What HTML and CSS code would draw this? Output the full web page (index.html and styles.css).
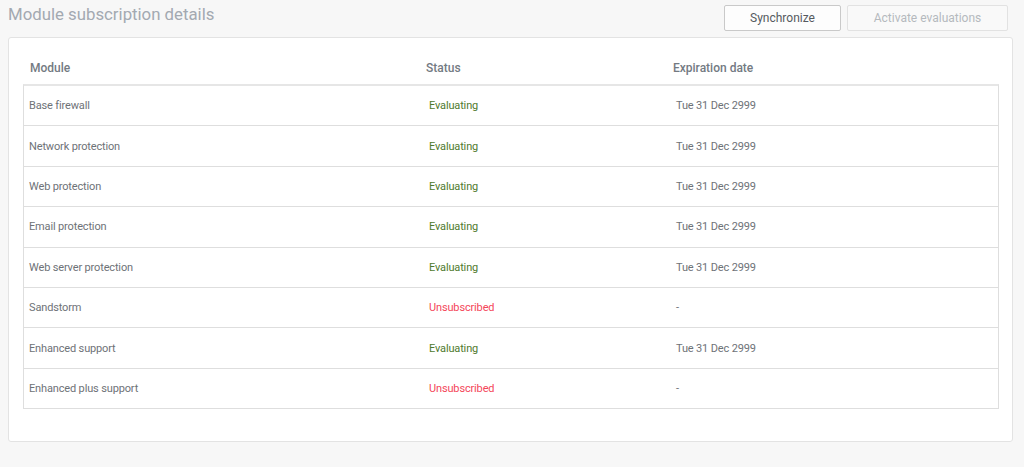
FILE: index.html
```html
<!DOCTYPE html>
<html>
<head>
<meta charset="utf-8">
<link rel="stylesheet" href="styles.css">
</head>
<body>
<div class="page">
  <div class="topbar">
    <h1 class="title">Module subscription details</h1>
    <div class="actions">
      <button class="btn">Synchronize</button>
      <button class="btn btn-disabled">Activate evaluations</button>
    </div>
  </div>
  <div class="card">
    <div class="thead">
      <div class="th c1">Module</div>
      <div class="th c2">Status</div>
      <div class="th c3">Expiration date</div>
    </div>
    <div class="tbody">
      <div class="row"><div class="td c1">Base firewall</div><div class="td c2 ok">Evaluating</div><div class="td c3">Tue 31 Dec 2999</div></div>
      <div class="row"><div class="td c1">Network protection</div><div class="td c2 ok">Evaluating</div><div class="td c3">Tue 31 Dec 2999</div></div>
      <div class="row"><div class="td c1">Web protection</div><div class="td c2 ok">Evaluating</div><div class="td c3">Tue 31 Dec 2999</div></div>
      <div class="row"><div class="td c1">Email protection</div><div class="td c2 ok">Evaluating</div><div class="td c3">Tue 31 Dec 2999</div></div>
      <div class="row"><div class="td c1">Web server protection</div><div class="td c2 ok">Evaluating</div><div class="td c3">Tue 31 Dec 2999</div></div>
      <div class="row"><div class="td c1">Sandstorm</div><div class="td c2 bad">Unsubscribed</div><div class="td c3">-</div></div>
      <div class="row"><div class="td c1">Enhanced support</div><div class="td c2 ok">Evaluating</div><div class="td c3">Tue 31 Dec 2999</div></div>
      <div class="row"><div class="td c1">Enhanced plus support</div><div class="td c2 bad">Unsubscribed</div><div class="td c3">-</div></div>
    </div>
  </div>
</div>
</body>
</html>
```

FILE: styles.css
```css
html, body {
  margin: 0;
  padding: 0;
  background: #f7f7f7;
  font-family: Roboto, "Liberation Sans", sans-serif;
}
.page {
  padding: 0 11px 0 8px;
}
.topbar {
  display: flex;
  align-items: flex-start;
  justify-content: space-between;
  height: 37px;
}
.title {
  margin: 2px 0 0 0;
  font-size: 16.8px;
  font-weight: 400;
  color: #a3a9b1;
  line-height: 24px;
}
.actions {
  display: flex;
  gap: 6px;
  margin-top: 5px;
  margin-right: 5px;
}
.btn {
  height: 26px;
  box-sizing: border-box;
  border: 1px solid #c9c9c9;
  border-radius: 2px;
  background: #fdfdfd;
  color: #555a60;
  font-family: Roboto, "Liberation Sans", sans-serif;
  font-size: 12px;
  padding: 0;
  width: 117px;
}
.btn-disabled {
  width: 161px;
  border-color: #e2e2e2;
  background: #f9f9f9;
  color: #b5b9be;
}
.card {
  background: #ffffff;
  border: 1px solid #e3e3e3;
  border-radius: 3px;
  height: 405px;
  box-sizing: border-box;
  padding: 0 13px 0 14px;
}
.thead {
  display: flex;
  height: 46px;
  align-items: center;
  padding-top: 14px;
  box-sizing: border-box;
}
.th {
  font-size: 12px;
  font-weight: 500;
  color: #737a82;
}
.c1 { width: 400px; flex: none; }
.c2 { width: 247px; flex: none; }
.c3 { flex: 1; }
.thead .c1 { padding-left: 7px; box-sizing: border-box; }
.thead .c2 { padding-left: 3px; box-sizing: border-box; }
.thead .c3 { padding-left: 3px; }
.tbody {
  border: 1px solid #dedede;
  border-top: 2px solid #e6e6e6;
}
.row {
  display: flex;
  align-items: center;
  height: 40.4px;
  box-sizing: border-box;
  border-top: 1px solid #dedede;
}
.row:first-child {
  border-top: none;
  height: 39.4px;
}
.td {
  font-size: 11px;
  letter-spacing: -0.15px;
  color: #6e7277;
}
.row .c1 { padding-left: 5px; box-sizing: border-box; }
.row .c2 { padding-left: 5px; box-sizing: border-box; }
.row .c3 { padding-left: 5px; }
.ok { color: #4f7a2e; }
.bad { color: #f4475a; }
```
